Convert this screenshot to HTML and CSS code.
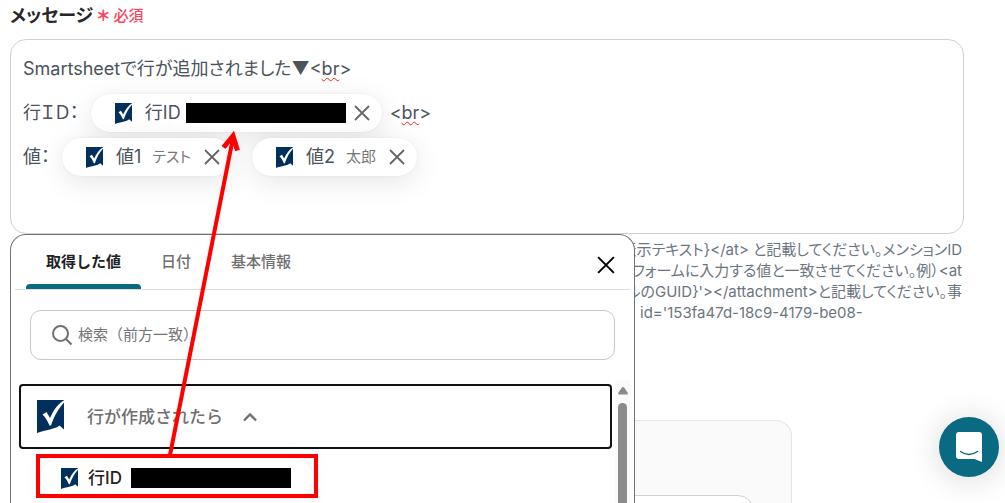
FILE: index.html
```html
<!DOCTYPE html>
<html lang="ja">
<head>
<meta charset="utf-8">
<meta name="viewport" content="width=device-width, initial-scale=1">
<title>メッセージ</title>
<link rel="stylesheet" href="styles.css">
</head>
<body>
<svg class="defs" aria-hidden="true">
  <symbol id="logo" viewBox="0 0 27 33">
    <path fill="#00305b" d="M0 0H27V29.500L22.500 25.500C19 29 8 30 0 33Z"/>
    <path fill="#fff" d="M5.500 14.500L9.500 12L13 18C17 9.500 21 4 27 .3V2.500C22 8 17.500 15 14 25.500H12.500C10.500 21 8.500 17.500 5.500 14.500Z"/>
  </symbol>
  <symbol id="cross" viewBox="0 0 16 16">
    <path fill="none" stroke="currentColor" stroke-width="1.800" d="M1 1L15 15M15 1L1 15"/>
  </symbol>
</svg>

<main class="page">
  <div class="field-label"><span id="message-label">メッセージ</span><span class="required"><span class="star">＊</span><span>必須</span></span></div>

  <div class="field">
    <div class="editor" role="textbox" aria-multiline="true" aria-labelledby="message-label">
      <div class="line">Smartsheetで行が追加されました▼&lt;<span class="typo">br</span>&gt;</div>
      <div class="line">
        <span class="caption">行ＩＤ：</span>
        <span class="chip"><svg class="chip-logo"><use href="#logo"/></svg><span class="chip-name">行ID</span><span class="mask"></span><button class="remove" type="button" aria-label="削除"><svg><use href="#cross"/></svg></button></span>
        <span class="after">&lt;<span class="typo">br</span>&gt;</span>
      </div>
      <div class="line">
        <span class="caption">値：</span>
        <span class="chip"><svg class="chip-logo"><use href="#logo"/></svg><span class="chip-name">値1</span><span class="chip-value">テスト</span><button class="remove" type="button" aria-label="削除"><svg><use href="#cross"/></svg></button></span>
        <span class="chip chip-next"><svg class="chip-logo"><use href="#logo"/></svg><span class="chip-name">値2</span><span class="chip-value">太郎</span><button class="remove" type="button" aria-label="削除"><svg><use href="#cross"/></svg></button></span>
      </div>
    </div>

    <section class="picker" aria-label="値の選択">
      <header class="picker-head">
        <div class="tabs" role="tablist">
          <button class="tab active" type="button" role="tab" aria-selected="true">取得した値</button>
          <button class="tab" type="button" role="tab" aria-selected="false">日付</button>
          <button class="tab" type="button" role="tab" aria-selected="false">基本情報</button>
        </div>
        <button class="close" type="button" aria-label="閉じる"><svg><use href="#cross"/></svg></button>
      </header>
      <label class="search">
        <svg class="search-icon" viewBox="0 0 22 22"><path fill="none" stroke="#6f6f6f" stroke-width="2" d="M17 9.500A7.500 7.500 0 1 1 2 9.500A7.500 7.500 0 1 1 17 9.500M15 15L20.500 20.500"/></svg>
        <input type="text" placeholder="検索（前方一致）" aria-label="検索">
      </label>
      <div class="results">
        <div class="results-list">
          <button class="group" type="button" aria-expanded="true">
            <svg class="group-logo"><use href="#logo"/></svg>
            <span>行が作成されたら</span>
            <svg class="chevron" viewBox="0 0 14 10"><path fill="none" stroke="#707070" stroke-width="2.400" d="M1 8.500L7 2.500L13 8.500"/></svg>
          </button>
          <button class="option" type="button">
            <svg class="chip-logo"><use href="#logo"/></svg><span>行ID</span><span class="mask"></span>
          </button>
        </div>
        <div class="scrollbar" aria-hidden="true">
          <svg class="scroll-up" viewBox="0 0 10 8"><path fill="#8b8b8b" d="M5 0Q6 0 6.500 1L9.800 6Q10 7.500 9 7.500H1Q0 7.500 .2 6L3.500 1Q4 0 5 0Z"/></svg>
          <div class="thumb"></div>
        </div>
      </div>
    </section>
  </div>

  <p class="help">
    <span>表示テキスト}&lt;/at&gt; と記載してください。メンションID</span>
    <span>のフォームに入力する値と一致させてください。例）&lt;at</span>
    <span>ルのGUID}'&gt;&lt;/attachment&gt;と記載してください。事</span>
    <span class="help-last">id='153fa47d-18c9-4179-be08-</span>
  </p>

  <section class="card"><div class="card-field"></div></section>
</main>

<button class="chat" type="button" aria-label="チャットを開く">
  <svg viewBox="0 0 28 32"><path fill="#fff" d="M4 1H24Q27 1 27 4V31L19.500 28H4Q1 28 1 25V4Q1 1 4 1Z"/><path fill="none" stroke="#0a6a82" stroke-width="1.500" stroke-linecap="round" d="M5.500 20.500Q14 26.500 22.500 20.500"/></svg>
</button>

<svg class="annotation" viewBox="0 0 1005 503" aria-hidden="true">
  <g fill="none" stroke="#f00" stroke-width="4">
    <path d="M38 456H316V496H38Z"/>
    <path d="M170 455L233 138"/>
    <path stroke-width="5" d="M223.500 147.500L233 136L237.500 150.500"/>
  </g>
</svg>
</body>
</html>
```

FILE: styles.css
```css
* {
  box-sizing: border-box;
}

body {
  margin: 0;
  height: 100vh;
  overflow: hidden;
  background: #fff;
  color: #4b535c;
  font-family: Inter, "Noto Sans CJK JP", sans-serif;
  line-height: 24px;
}

button {
  margin: 0;
  padding: 0;
  border: 0;
  background: none;
  color: inherit;
  font: inherit;
  cursor: pointer;
}

svg {
  display: block;
  flex: none;
}

.defs {
  position: absolute;
  width: 0;
  height: 0;
}

.page {
  display: flex;
  flex-direction: column;
  height: 100%;
  padding: 4px 41px 0 10px;
}

.field-label {
  display: flex;
  align-items: center;
  gap: 4px;
  height: 24px;
  margin-bottom: 11px;
  color: #242629;
  font-size: 18px;
  font-weight: 700;
  font-feature-settings: "palt";
}

.required {
  display: flex;
  gap: 4px;
  color: #fb4659;
  font-size: 15px;
  font-weight: 500;
}

.star {
  font-weight: 900;
}

.field {
  position: relative;
}

.editor {
  min-height: 195px;
  padding: 7px 12px;
  border: 1px solid #ced1d6;
  border-radius: 16px;
  font-size: 18px;
  font-feature-settings: "palt";
}

.line {
  display: flex;
  align-items: center;
  height: 44px;
  white-space: pre;
}

.typo {
  text-decoration: underline wavy #f22 1px;
  text-underline-offset: 2px;
  text-decoration-skip-ink: none;
}

.caption {
  margin-right: 12px;
}

.chip {
  display: flex;
  align-items: center;
  height: 38px;
  padding: 0 12px 0 24px;
  border-radius: 19px;
  background: #fff;
  box-shadow: 0 6px 28px rgba(0, 0, 0, .1), 0 0 2px rgba(0, 0, 0, .08);
}

.chip-next {
  margin-left: 20px;
}

.chip-logo {
  width: 17px;
  height: 21px;
}

.chip-name {
  margin-left: 13px;
}

.chip-value {
  margin-left: 11px;
  color: #777;
  font-size: 15px;
}

.mask {
  width: 160px;
  height: 20px;
  margin-left: 5px;
  background: #000;
}

.remove {
  margin-left: 13px;
  color: #666;
}

.mask + .remove {
  margin-left: 8px;
}

.remove svg {
  width: 16px;
  height: 16px;
}

.after {
  margin-left: 8px;
}

.picker {
  position: absolute;
  z-index: 2;
  top: 100%;
  left: 0;
  display: flex;
  flex-direction: column;
  width: 625px;
  max-width: 100%;
  height: calc(100vh - 234px);
  padding: 0 4px;
  border: 1px solid #707276;
  border-bottom: 0;
  border-radius: 16px 16px 0 0;
  background: #fff;
}

.picker-head {
  display: flex;
  flex: none;
  justify-content: space-between;
  align-items: stretch;
  height: 55px;
  padding: 0 15px 0 11px;
  border-bottom: 1px solid #dedfe0;
}

.tabs {
  display: flex;
}

.tab {
  position: relative;
  padding: 0 20px;
  color: #707070;
  font-size: 15px;
  font-weight: 500;
}

.tab.active {
  color: #222;
  font-weight: 700;
}

.tab.active::after {
  content: "";
  position: absolute;
  right: 0;
  bottom: 0;
  left: 0;
  height: 5px;
  border-radius: 4px 4px 0 0;
  background: #0a6a82;
}

.close {
  padding-top: 5px;
  color: #000;
}

.close svg {
  width: 18px;
  height: 18px;
}

.search {
  display: flex;
  flex: none;
  align-items: center;
  gap: 5px;
  height: 50px;
  margin: 20px 15px;
  padding: 0 20px;
  border: 1px solid #c6c8cb;
  border-radius: 11px;
}

.search-icon {
  width: 22px;
  height: 22px;
}

.search input {
  flex: 1;
  min-width: 0;
  height: 24px;
  padding: 0;
  border: 0;
  outline: 0;
  background: none;
  font: inherit;
  font-size: 15px;
}

.search input::placeholder {
  color: #757575;
  opacity: 1;
}

.results {
  display: flex;
  flex: 1;
  min-height: 0;
  justify-content: space-between;
}

.results-list {
  flex: 1;
  padding: 4px 3px 0 4px;
}

.group {
  display: flex;
  align-items: center;
  width: 100%;
  height: 65px;
  padding: 0 16px;
  border: 2px solid #111;
  border-radius: 4px;
  color: #707070;
  font-size: 17px;
  font-weight: 500;
}

.group-logo {
  width: 27px;
  height: 33px;
  margin-right: 23px;
}

.chevron {
  width: 14px;
  height: 10px;
  margin-left: 20px;
}

.option {
  display: flex;
  align-items: center;
  height: 40px;
  margin: 9px 0 0 22px;
  padding: 0 22px 0 20px;
  border-radius: 20px;
  box-shadow: 0 0 28px rgba(0, 0, 0, .05), 0 0 2px rgba(0, 0, 0, .08);
  color: #222;
  font-size: 17px;
  font-weight: 500;
}

.option span:not(.mask) {
  margin-left: 10px;
}

.option .mask {
  margin-left: 9px;
}

.scrollbar {
  display: flex;
  flex-direction: column;
  width: 15px;
  padding: 7px 3px 0;
  background: #fafafa;
}

.scroll-up {
  width: 10px;
  height: 8px;
}

.thumb {
  flex: 1;
  width: 9px;
  margin-top: 8px;
  border-radius: 5px 5px 0 0;
  background: #8b8b8b;
}

.help {
  margin: 5px 2px 97px 600px;
  color: #6c757f;
  font-size: 15px;
  font-feature-settings: "palt";
  line-height: 21px;
  text-align: right;
  white-space: nowrap;
}

.help span {
  display: block;
}

.help .help-last {
  padding-left: 30px;
  text-align: left;
}

.card {
  flex: 1;
  min-height: 0;
  overflow: hidden;
  margin-right: 172px;
  padding: 74px 37px 0;
  border: 1px solid #e4e5e7;
  border-bottom: 0;
  border-radius: 16px 16px 0 0;
  background: #fafafa;
}

.card-field {
  height: 48px;
  border: 1px solid #ced1d6;
  border-radius: 16px;
  background: #fff;
}

.chat {
  position: fixed;
  z-index: 3;
  right: 6px;
  bottom: 26px;
  display: grid;
  place-items: center;
  width: 60px;
  height: 60px;
  border-radius: 50%;
  background: #0a6a82;
  box-shadow: 0 2px 32px rgba(0, 0, 0, .16);
}

.chat svg {
  width: 28px;
  height: 32px;
}

.annotation {
  position: absolute;
  z-index: 4;
  top: 0;
  left: 0;
  width: 1005px;
  height: 503px;
  pointer-events: none;
}
```
